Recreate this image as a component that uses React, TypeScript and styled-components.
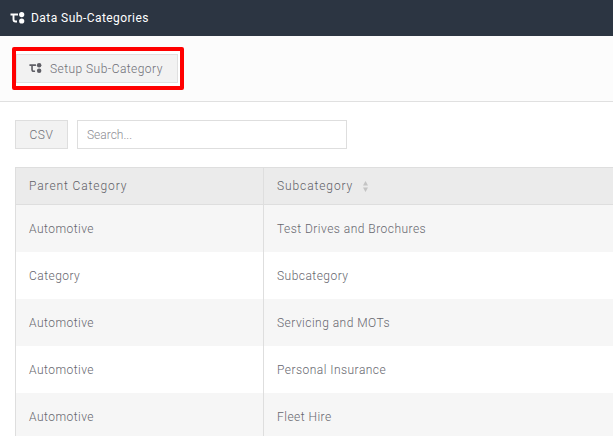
import { createGlobalStyle } from "styled-components";
import styled from "styled-components";

const rows = [
  { parent: "Automotive", sub: "Test Drives and Brochures" },
  { parent: "Category", sub: "Subcategory" },
  { parent: "Automotive", sub: "Servicing and MOTs" },
  { parent: "Automotive", sub: "Personal Insurance" },
  { parent: "Automotive", sub: "Fleet Hire" },
];

const GlobalStyle = createGlobalStyle`
  html, body {
    margin: 0;
    padding: 0;
    width: 613px;
    height: 436px;
    overflow: hidden;
    background: #fff;
    font-family: Roboto, "Liberation Sans", sans-serif;
    font-weight: 300;
  }
`;

const TopBar = styled.header`
  height: 36px;
  background: #2c3542;
  display: flex;
  align-items: center;
  padding-left: 10px;
  gap: 6px;
  color: #fff;
  font-size: 12px;
  font-weight: 400;
  letter-spacing: 0.45px;
`;

const Toolbar = styled.div`
  height: 66px;
  box-sizing: border-box;
  background: #fcfcfc;
  border-bottom: 1px solid #e0e0e0;
  padding: 11px 0 0 12px;
`;

const Highlight = styled.div`
  width: 172px;
  height: 43px;
  box-sizing: border-box;
  border: 4px solid #ff0000;
  border-radius: 2px;
  padding: 3px 2px 3px 0;
  background: #fff;
`;

const SetupButton = styled.button`
  width: 100%;
  height: 29px;
  box-sizing: border-box;
  background: #f2f2f2;
  border: 1px solid #e0e0e0;
  padding: 0 0 0 12px;
  display: flex;
  align-items: center;
  gap: 8px;
  color: #6f6f77;
  font-family: inherit;
  font-size: 12px;
  font-weight: 300;
  letter-spacing: 0.45px;
`;

const Controls = styled.div`
  display: flex;
  gap: 9px;
  padding: 18px 0 0 15px;
`;

const CsvButton = styled.button`
  width: 53px;
  height: 29px;
  box-sizing: border-box;
  background: #f2f2f2;
  border: 1px solid #dedede;
  color: #6f6f77;
  font-family: inherit;
  font-size: 12px;
  font-weight: 300;
  letter-spacing: 0.6px;
  padding: 0;
`;

const SearchInput = styled.input`
  width: 270px;
  height: 29px;
  box-sizing: border-box;
  background: #fff;
  border: 1px solid #dedede;
  padding: 0 9px;
  font-family: inherit;
  font-size: 12px;
  font-weight: 300;
  outline: none;
  &::placeholder {
    color: #8d8d93;
  }
`;

const Table = styled.div`
  margin: 18px 0 0 15px;
  border-left: 1px solid #dedede;
  border-top: 1px solid #dedede;
`;

const Row = styled.div<{ $kind: "head" | "odd" | "even" }>`
  display: grid;
  grid-template-columns: 247px 1fr;
  height: ${(p) => (p.$kind === "head" ? "37px" : "47px")};
  box-sizing: border-box;
  border-bottom: ${(p) => (p.$kind === "head" ? "1px solid #dedede" : "none")};
  background: ${(p) =>
    p.$kind === "head" ? "#ebebeb" : p.$kind === "odd" ? "#f6f6f6" : "#fff"};
`;

const Cell = styled.div<{ $head?: boolean }>`
  display: flex;
  align-items: center;
  gap: 10px;
  padding-left: 13px;
  color: ${(p) => (p.$head ? "#5f5f67" : "#66666e")};
  font-size: 12px;
  letter-spacing: ${(p) => (p.$head ? "0.9px" : "0.47px")};
  & + & {
    border-left: 1px solid #dedede;
  }
`;

function Logo({ color, width }: { color: string; width: number }) {
  return (
    <svg width={width} height={(width * 12) / 15} viewBox="0 0 15 12">
      <path
        d="M0.5 2.5 H8 M3.5 2.5 V7.5 Q3.5 9.5 5.5 9.5 H7"
        fill="none"
        stroke={color}
        strokeWidth="1.9"
      />
      <circle cx="11.7" cy="2.6" r="2.6" fill={color} />
      <circle cx="11.7" cy="9" r="2.6" fill={color} />
    </svg>
  );
}

function SortIcon() {
  return (
    <svg width="5" height="11" viewBox="0 0 5 11">
      <path d="M2.5 0 L5 4.5 H0 Z M2.5 11 L0 6.5 H5 Z" fill="#c4c4c4" />
    </svg>
  );
}

export default function App() {
  return (
    <>
      <GlobalStyle />
      <TopBar>
        <Logo color="#ffffff" width={15} />
        Data Sub-Categories
      </TopBar>
      <Toolbar>
        <Highlight>
          <SetupButton>
            <Logo color="#5f5f66" width={13} />
            Setup Sub-Category
          </SetupButton>
        </Highlight>
      </Toolbar>
      <Controls>
        <CsvButton>CSV</CsvButton>
        <SearchInput placeholder="Search..." />
      </Controls>
      <Table>
        <Row $kind="head">
          <Cell $head>Parent Category</Cell>
          <Cell $head>
            Subcategory
            <SortIcon />
          </Cell>
        </Row>
        {rows.map((row, i) => (
          <Row key={i} $kind={i % 2 === 0 ? "odd" : "even"}>
            <Cell>{row.parent}</Cell>
            <Cell>{row.sub}</Cell>
          </Row>
        ))}
      </Table>
    </>
  );
}
